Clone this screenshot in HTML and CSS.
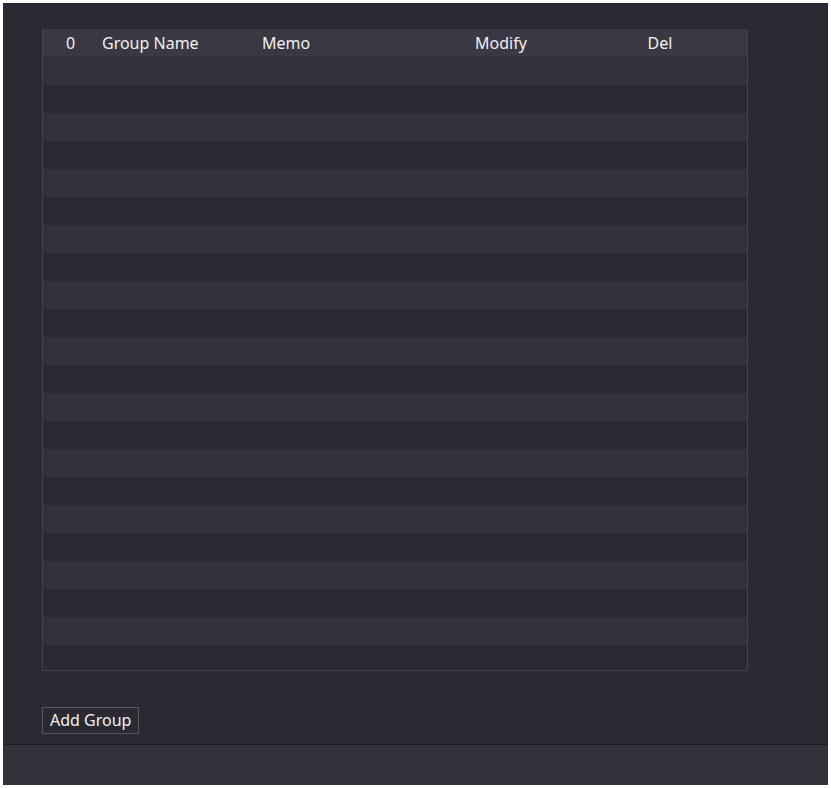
FILE: index.html
```html
<!DOCTYPE html>
<html>
<head>
<meta charset="utf-8">
<link rel="stylesheet" href="styles.css">
</head>
<body>
<div class="panel">
  <div class="content">
    <div class="table">
      <div class="row head">
        <div class="c c0">0</div>
        <div class="c c1">Group Name</div>
        <div class="c c2">Memo</div>
        <div class="c c3">Modify</div>
        <div class="c c4">Del</div>
        <div class="c c5"></div>
      </div>
      <div class="body">
        <div class="row odd"></div><div class="row"></div>
        <div class="row odd"></div><div class="row"></div>
        <div class="row odd"></div><div class="row"></div>
        <div class="row odd"></div><div class="row"></div>
        <div class="row odd"></div><div class="row"></div>
        <div class="row odd"></div><div class="row"></div>
        <div class="row odd"></div><div class="row"></div>
        <div class="row odd"></div><div class="row"></div>
        <div class="row odd"></div><div class="row"></div>
        <div class="row odd"></div><div class="row"></div>
        <div class="row odd"></div><div class="row"></div>
      </div>
    </div>
    <div class="actions">
      <button class="btn">Add Group</button>
    </div>
  </div>
  <div class="footer"></div>
</div>
</body>
</html>
```

FILE: styles.css
```css
html, body {
  margin: 0;
  padding: 0;
  background: #ffffff;
}
body {
  padding: 3px;
  font-family: "Noto Sans", "Open Sans", sans-serif;
}
.panel {
  width: 825px;
  height: 782px;
  background: #2b2a32;
  display: flex;
  flex-direction: column;
}
.content {
  flex: 1;
  padding: 26px 0 0 39px;
}
.table {
  width: 704px;
  height: 641px;
  border: 1px solid #44434c;
  border-top: none;
  display: flex;
  flex-direction: column;
  overflow: hidden;
  box-sizing: content-box;
}
.row {
  height: 28px;
  flex: none;
  display: grid;
  grid-template-columns: 55px 160px 162px 162px 156px 1fr;
  align-items: center;
}
.head {
  background: #3a3943;
  color: #f0f0f2;
  font-size: 16px;
  border-bottom: 1px solid #302f37;
  height: 27px;
}
.c0, .c3, .c4 { text-align: center; }
.c1, .c2 { padding-left: 4px; }
.body {
  flex: 1;
  overflow: hidden;
}
.body .row { background: #2b2a33; }
.body .row.odd { background: #33323b; }
.actions {
  padding-top: 36px;
}
.btn {
  font-family: "Noto Sans", "Open Sans", sans-serif;
  font-size: 16px;
  color: #f0f0f2;
  background: #2b2a32;
  border: 1px solid #585760;
  height: 27px;
  padding: 0 7px;
  line-height: 23px;
  margin: 0;
}
.footer {
  height: 40px;
  background: #33323b;
  border-top: 1px solid #1e1d23;
}
```
